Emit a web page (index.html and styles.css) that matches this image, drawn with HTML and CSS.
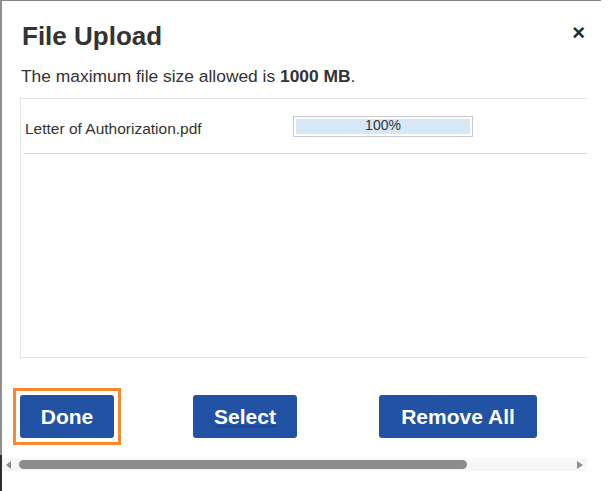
FILE: index.html
```html
<!DOCTYPE html>
<html lang="en">
<head>
<meta charset="utf-8">
<title>File Upload</title>
<link rel="stylesheet" href="styles.css">
</head>
<body>
<div class="dialog">
  <div class="header">
    <h1 class="title">File Upload</h1>
    <button class="close" type="button" aria-label="Close">×</button>
  </div>
  <p class="limit">The maximum file size allowed is <b>1000 MB</b>.</p>
  <div class="viewport">
    <div class="content">
      <div class="filelist">
        <div class="file-row">
          <span class="file-name">Letter of Authorization.pdf</span>
          <div class="progress"><div class="progress-fill" style="width:100%"><span class="progress-text">100%</span></div></div>
        </div>
      </div>
      <div class="actions">
        <div class="focus-ring"><button class="btn btn-done" type="button">Done</button></div>
        <button class="btn btn-select" type="button">Select</button>
        <button class="btn btn-remove" type="button">Remove All</button>
      </div>
    </div>
  </div>
</div>
<div class="scroll-row">
  <div class="track">
    <span class="arrow arrow-left"></span>
    <span class="thumb"></span>
    <span class="arrow arrow-right"></span>
  </div>
</div>
</body>
</html>
```
FILE: styles.css
```css
html, body {
  margin: 0;
  padding: 0;
  background: #fff;
}
body {
  font-family: "Liberation Sans", Arial, sans-serif;
  color: #333;
  width: 609px;
  height: 491px;
  overflow: hidden;
}
.dialog {
  width: 599px;
  height: 454px;
  border-top: 1px solid #858585;
  border-left: 2px solid #8e8e8e;
  display: flex;
  flex-direction: column;
}
.header {
  display: flex;
  align-items: flex-start;
  justify-content: space-between;
  padding: 20px 16px 0 20px;
}
.title {
  margin: 0;
  font-size: 26px;
  line-height: 30px;
  font-weight: bold;
  color: #333;
}
.close {
  margin-top: 1px;
  padding: 0;
  border: 0;
  background: none;
  font-family: "Liberation Sans", Arial, sans-serif;
  font-size: 22px;
  line-height: 22px;
  font-weight: bold;
  color: #2a2a2a;
}
.limit {
  margin: 15px 0 0 19px;
  font-size: 17.4px;
  line-height: 20px;
}
.limit b {
  font-weight: bold;
}
.viewport {
  margin-top: 12px;
  width: 585px;
  overflow: hidden;
}
.content {
  width: 700px;
  padding-left: 18px;
  padding-bottom: 10px;
}
.filelist {
  box-sizing: border-box;
  height: 260px;
  border: 1px solid #e4e4e4;
  padding: 0 3px;
}
.file-row {
  display: flex;
  align-items: flex-start;
  padding: 17px 0 15px;
  border-bottom: 1px solid #d9d9d9;
}
.file-name {
  width: 268px;
  margin-top: 4px;
  padding-left: 1px;
  font-size: 15.5px;
  line-height: 18px;
  color: #333;
}
.progress {
  box-sizing: border-box;
  width: 180px;
  height: 21px;
  border: 1px solid #c9c9c9;
  padding: 2px;
  background: #fff;
}
.progress-fill {
  height: 15px;
  background: #d6e8f8;
  display: flex;
  justify-content: center;
}
.progress-text {
  font-size: 14px;
  line-height: 13px;
  color: #333;
}
.actions {
  display: flex;
  align-items: center;
  margin-top: 37px;
  gap: 79px;
}
.focus-ring {
  display: flex;
  margin: -7px;
  padding: 4px;
  border: 3px solid #fa872c;
}
.btn {
  height: 43px;
  padding: 0 20px;
  border: 0;
  border-radius: 3px;
  background: #2152a3;
  color: #fff;
  font-family: "Liberation Sans", Arial, sans-serif;
  font-size: 21px;
  font-weight: bold;
}
.btn-done {
  width: 94px;
}
.btn-select {
  width: 104px;
  text-decoration: underline;
  text-decoration-color: #1c4390;
  text-decoration-thickness: 1px;
  text-underline-offset: 2px;
}
.btn-remove {
  width: 158px;
  margin-left: 3px;
}
.scroll-row {
  height: 36px;
  border-left: 2px solid #2e2e2e;
  padding-top: 3px;
  box-sizing: border-box;
}
.track {
  width: 585px;
  height: 13px;
  background: #f7f7f7;
  display: flex;
  align-items: center;
}
.arrow {
  width: 0;
  height: 0;
  border-top: 4px solid transparent;
  border-bottom: 4px solid transparent;
}
.arrow-left {
  margin-left: 4px;
  border-right: 5px solid #8e8e8e;
}
.arrow-right {
  margin-left: auto;
  margin-right: 4px;
  border-left: 6px solid #8e8e8e;
}
.thumb {
  margin-left: 8px;
  width: 448px;
  height: 9px;
  border-radius: 4.5px;
  background: #8c8c8c;
}
```
